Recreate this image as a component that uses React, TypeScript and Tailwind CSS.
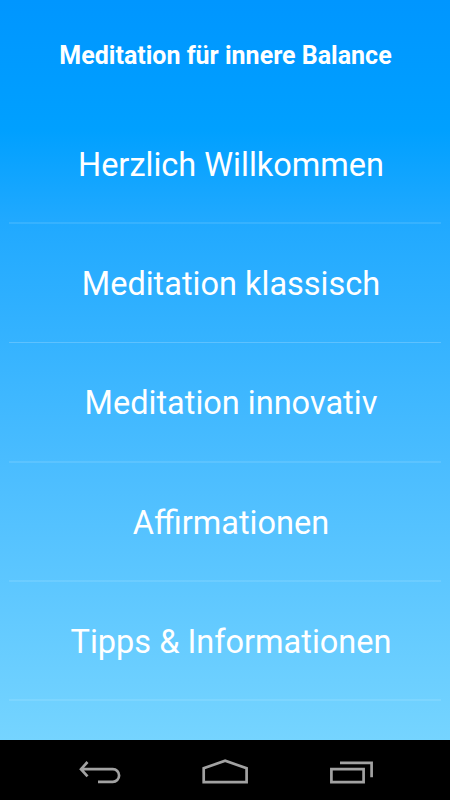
const menuItems = [
  { label: "Herzlich Willkommen", className: "h-[119px] border-b-2 border-white/10" },
  { label: "Meditation klassisch", className: "h-[119px] border-b border-white/20" },
  { label: "Meditation innovativ", className: "h-[120px] border-b-2 border-white/10" },
  { label: "Affirmationen", className: "h-[119px] border-b-2 border-white/10" },
  { label: "Tipps & Informationen", className: "h-[119px] border-b-2 border-white/10" },
];

function BackIcon() {
  return (
    <svg width="44" height="24" viewBox="0 0 44 24" fill="none" stroke="#a2a2a2" strokeWidth="2.7" aria-hidden="true">
      <path d="M10.500 2 4 9.200l6.500 7.200M4 9.200H35.800a6.300 6.300 0 0 1 0 12.600H21" />
    </svg>
  );
}

function HomeIcon() {
  return (
    <svg width="46" height="26" viewBox="0 0 46 26" fill="none" stroke="#a2a2a2" strokeWidth="2.7" aria-hidden="true">
      <path d="M1.700 23.200V9.200L23.150 1.800l21.450 7.400v14z" />
    </svg>
  );
}

function RecentsIcon() {
  return (
    <svg width="44" height="24" viewBox="0 0 44 24" fill="none" stroke="#a2a2a2" strokeWidth="2.7" aria-hidden="true">
      <path d="M2.400 9.100h32.200v13H2.400zM11 2.900h31.600v14.300" />
    </svg>
  );
}

export default function App() {
  return (
    <div className="flex h-[800px] w-[450px] flex-col overflow-hidden bg-black font-[Roboto,sans-serif] text-white">
      <main className="flex h-[740px] flex-col bg-[linear-gradient(to_bottom,#0096ff_0px,#00a0ff_130px,#20a9ff_220px,#4dbeff_480px,#75d4ff_740px)]">
        <header className="flex h-[105px] items-center justify-center pl-px pt-[7px]">
          <h1 className="whitespace-nowrap text-[25px] font-bold leading-8">Meditation für innere Balance</h1>
        </header>
        <nav className="mx-[9px] flex flex-col">
          {menuItems.map((item) => (
            <a
              key={item.label}
              href="#"
              className={`flex items-center justify-center pl-3 pt-[2px] text-[32.5px] leading-10 ${item.className}`}
            >
              <span className="whitespace-nowrap">{item.label}</span>
            </a>
          ))}
        </nav>
      </main>
      <footer className="flex h-[60px] items-center justify-between bg-black px-[77px] pt-[3px]">
        <BackIcon />
        <HomeIcon />
        <RecentsIcon />
      </footer>
    </div>
  );
}
